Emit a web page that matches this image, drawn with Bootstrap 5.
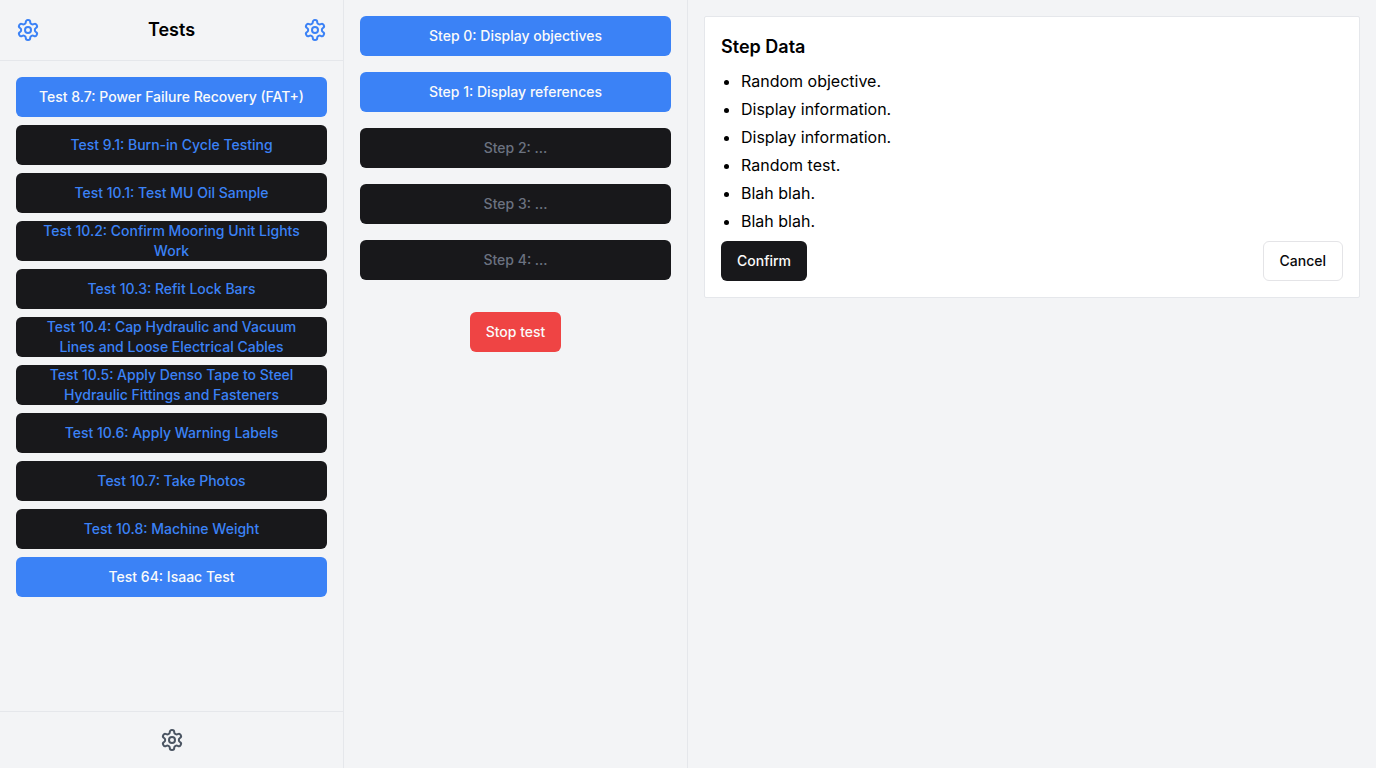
<!DOCTYPE html>
<html lang="en">
<head>
<meta charset="utf-8">
<meta name="viewport" content="width=device-width, initial-scale=1">
<title>Tests</title>
<link rel="stylesheet" href="https://cdn.jsdelivr.net/npm/bootstrap@5.3.0/dist/css/bootstrap.min.css">
<style>
body { font-family: Inter, sans-serif; font-size: 16px; line-height: 24px; color: #000; background: #f3f4f6; }
.pane { border-right: 1px solid #e5e7eb; }
.bar-top { border-bottom: 1px solid #e5e7eb; }
.bar-bottom { border-top: 1px solid #e5e7eb; }
.title { font-size: 18px; line-height: 28px; font-weight: 600; }
.gear { width: 24px; height: 24px; color: #3b82f6; display: block; }
.gear-muted { color: #4b5563; }
.action {
  --bs-btn-font-size: 14px; --bs-btn-line-height: 20px; --bs-btn-font-weight: 500;
  --bs-btn-padding-x: 16px; --bs-btn-padding-y: 0; --bs-btn-border-radius: 6px; --bs-btn-border-width: 0;
  --bs-btn-disabled-opacity: 1;
  height: 40px; display: flex; align-items: center; justify-content: center;
}
.action-blue { --bs-btn-bg: #3b82f6; --bs-btn-color: #fafafa; --bs-btn-hover-bg: #2563eb; --bs-btn-hover-color: #fafafa; }
.action-dark { --bs-btn-bg: #18181b; --bs-btn-color: #3b82f6; --bs-btn-hover-bg: #27272a; --bs-btn-hover-color: #3b82f6; }
.action-idle { --bs-btn-disabled-bg: #18181b; --bs-btn-disabled-color: #6b7280; }
.action-confirm { --bs-btn-bg: #18181b; --bs-btn-color: #fafafa; --bs-btn-hover-bg: #27272a; --bs-btn-hover-color: #fafafa; }
.action-red { --bs-btn-bg: #ef4444; --bs-btn-color: #fafafa; --bs-btn-hover-bg: #dc2626; --bs-btn-hover-color: #fafafa; }
.action-plain { --bs-btn-bg: #fff; --bs-btn-color: #09090b; --bs-btn-border-width: 1px; --bs-btn-border-color: #e4e4e7; --bs-btn-hover-bg: #f4f4f5; --bs-btn-hover-color: #09090b; }
.step-card { --bs-card-border-color: #e5e7eb; --bs-card-border-radius: 2px; --bs-card-color: #000; }
.step-list { padding-left: 20px; display: grid; gap: 4px; }
</style>
</head>
<body>
<svg class="d-none" xmlns="http://www.w3.org/2000/svg">
  <symbol id="gear" viewBox="0 0 24 24" fill="none" stroke="currentColor" stroke-width="2" stroke-linecap="round" stroke-linejoin="round">
    <path d="M12.22 2h-.44a2 2 0 0 0-2 2v.18a2 2 0 0 1-1 1.73l-.43.25a2 2 0 0 1-2 0l-.15-.08a2 2 0 0 0-2.73.73l-.22.38a2 2 0 0 0 .73 2.73l.15.1a2 2 0 0 1 1 1.72v.51a2 2 0 0 1-1 1.74l-.15.09a2 2 0 0 0-.73 2.73l.22.38a2 2 0 0 0 2.73.73l.15-.08a2 2 0 0 1 2 0l.43.25a2 2 0 0 1 1 1.73V20a2 2 0 0 0 2 2h.44a2 2 0 0 0 2-2v-.18a2 2 0 0 1 1-1.73l.43-.25a2 2 0 0 1 2 0l.15.08a2 2 0 0 0 2.73-.73l.22-.39a2 2 0 0 0-.73-2.73l-.15-.08a2 2 0 0 1-1-1.74v-.5a2 2 0 0 1 1-1.74l.15-.09a2 2 0 0 0 .73-2.73l-.22-.38a2 2 0 0 0-2.73-.73l-.15.08a2 2 0 0 1-2 0l-.43-.25a2 2 0 0 1-1-1.73V4a2 2 0 0 0-2-2z"/>
    <circle cx="12" cy="12" r="3"/>
  </symbol>
</svg>
<div class="container-fluid p-0">
  <div class="row g-0 min-vh-100">
    <aside class="col-3 pane d-flex flex-column">
      <header class="bar-top d-flex align-items-center justify-content-between p-3">
        <button type="button" class="btn border-0 p-0" aria-label="Test settings"><svg class="gear"><use href="#gear"/></svg></button>
        <h1 class="title m-0">Tests</h1>
        <button type="button" class="btn border-0 p-0" aria-label="List settings"><svg class="gear"><use href="#gear"/></svg></button>
      </header>
      <div class="d-grid gap-2 p-3 align-content-start flex-grow-1">
        <button type="button" class="btn action action-blue">Test 8.7: Power Failure Recovery (FAT+)</button>
        <button type="button" class="btn action action-dark">Test 9.1: Burn-in Cycle Testing</button>
        <button type="button" class="btn action action-dark">Test 10.1: Test MU Oil Sample</button>
        <button type="button" class="btn action action-dark">Test 10.2: Confirm Mooring Unit Lights Work</button>
        <button type="button" class="btn action action-dark">Test 10.3: Refit Lock Bars</button>
        <button type="button" class="btn action action-dark">Test 10.4: Cap Hydraulic and Vacuum Lines and Loose Electrical Cables</button>
        <button type="button" class="btn action action-dark">Test 10.5: Apply Denso Tape to Steel Hydraulic Fittings and Fasteners</button>
        <button type="button" class="btn action action-dark">Test 10.6: Apply Warning Labels</button>
        <button type="button" class="btn action action-dark">Test 10.7: Take Photos</button>
        <button type="button" class="btn action action-dark">Test 10.8: Machine Weight</button>
        <button type="button" class="btn action action-blue">Test 64: Isaac Test</button>
      </div>
      <footer class="bar-bottom d-flex justify-content-center p-3">
        <button type="button" class="btn border-0 p-0" aria-label="Application settings"><svg class="gear gear-muted"><use href="#gear"/></svg></button>
      </footer>
    </aside>
    <section class="col-3 pane p-3">
      <div class="d-grid gap-3">
        <button type="button" class="btn action action-blue">Step 0: Display objectives</button>
        <button type="button" class="btn action action-blue">Step 1: Display references</button>
        <button type="button" class="btn action action-idle" disabled>Step 2: ...</button>
        <button type="button" class="btn action action-idle" disabled>Step 3: ...</button>
        <button type="button" class="btn action action-idle" disabled>Step 4: ...</button>
      </div>
      <div class="d-flex justify-content-center pt-3 mt-3">
        <button type="button" class="btn action action-red">Stop test</button>
      </div>
    </section>
    <main class="col-6 p-3">
      <div class="card step-card">
        <div class="card-body p-3">
          <h2 class="title mb-2">Step Data</h2>
          <ul class="step-list mb-2">
            <li>Random objective.</li>
            <li>Display information.</li>
            <li>Display information.</li>
            <li>Random test.</li>
            <li>Blah blah.</li>
            <li>Blah blah.</li>
          </ul>
          <div class="d-flex justify-content-between">
            <button type="button" class="btn action action-confirm">Confirm</button>
            <button type="button" class="btn action action-plain">Cancel</button>
          </div>
        </div>
      </div>
    </main>
  </div>
</div>
<script src="https://cdn.jsdelivr.net/npm/bootstrap@5.3.0/dist/js/bootstrap.bundle.min.js"></script>
</body>
</html>
